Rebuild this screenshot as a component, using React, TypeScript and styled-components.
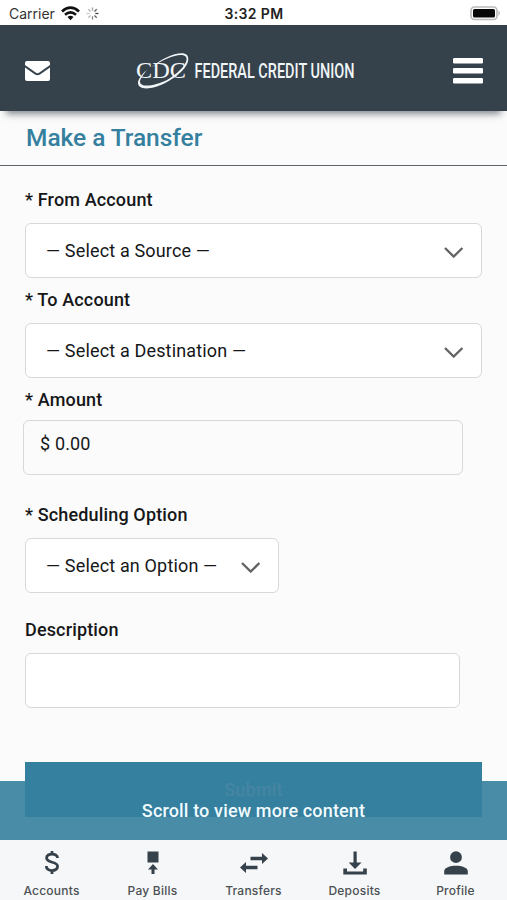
import React from "react";
import styled, { createGlobalStyle } from "styled-components";

const GlobalStyle = createGlobalStyle`
  * { box-sizing: border-box; }
  body { margin: 0; background: #fbfbfb; font-family: Roboto, "Liberation Sans", sans-serif; }
`;

const Screen = styled.div`
  position: relative;
  display: flex;
  flex-direction: column;
  width: 507px;
  height: 900px;
  overflow: hidden;
  background: #fbfbfb;
  color: #151719;
`;

const StatusBar = styled.div`
  display: grid;
  grid-template-columns: 1fr auto 1fr;
  align-items: center;
  height: 25px;
  padding: 2px 6px 0 9px;
  background: #fff;
  font-family: Inter, "Liberation Sans", sans-serif;
  font-size: 14px;
  line-height: 22px;
`;

const Carrier = styled.div`
  display: flex;
  align-items: center;
  gap: 6px;
  color: #333;
`;

const Clock = styled.div`
  margin-right: 2px;
  font-weight: 600;
  letter-spacing: 0.35px;
  color: #222;
`;

const Battery = styled.svg`
  justify-self: end;
`;

const Header = styled.header`
  display: flex;
  align-items: center;
  justify-content: space-between;
  height: 86px;
  flex: none;
  padding: 5px 24px 0 25px;
  background: #35414b;
  box-shadow: 0 9px 7px -6px rgba(50, 60, 70, 0.6);
  z-index: 1;
`;

const LogoLink = styled.a`
  display: flex;
  margin-right: 8px;
`;

const LogoSvg = styled.svg`
  overflow: visible;
`;

const IconButton = styled.button`
  display: flex;
  padding: 0;
  border: 0;
  background: none;
`;

const TitleBar = styled.div`
  flex: none;
  height: 55px;
  padding: 12px 25px 0 26px;
  border-bottom: 1px solid #5c6469;
`;

const Title = styled.h1`
  margin: 0;
  font-size: 24.5px;
  font-weight: 500;
  line-height: 30px;
  letter-spacing: -0.05px;
  color: #35809e;
`;

const Form = styled.form`
  display: flex;
  flex-direction: column;
  padding: 22px 25px 0;
`;

const Field = styled.div<{ $height: number }>`
  height: ${(p) => p.$height}px;
`;

const Label = styled.label<{ $gap?: number }>`
  display: block;
  margin-bottom: ${(p) => p.$gap ?? 11}px;
  font-size: 18px;
  font-weight: 500;
  line-height: 24px;
  letter-spacing: 0.15px;
`;

const Control = styled.div<{ $width: number }>`
  display: flex;
  align-items: center;
  justify-content: space-between;
  width: ${(p) => p.$width}px;
  height: 55px;
  padding: 0 18px 0 20px;
  border: 1px solid #d6d8d9;
  border-radius: 6px;
  background: #fff;
  font-size: 18px;
  line-height: 24px;
  letter-spacing: 0.16px;
`;

const AmountControl = styled(Control)`
  margin-left: -2px;
  padding: 0 16px 8px;
  background: #fbfbfb;
`;

const Submit = styled.button`
  height: 55px;
  padding: 0;
  border: 0;
  background: #35809e;
  color: #d0b4b4;
  font: 500 18px/24px Roboto, sans-serif;
  letter-spacing: 0.2px;
`;

const ScrollHint = styled.div`
  position: absolute;
  left: 0;
  right: 0;
  bottom: 60px;
  height: 59px;
  display: flex;
  align-items: center;
  justify-content: center;
  background: rgba(53, 128, 158, 0.9);
  color: #f1fafd;
  font-size: 18px;
  font-weight: 500;
  letter-spacing: 0.15px;
`;

const TabBar = styled.nav`
  position: absolute;
  left: 0;
  right: 0;
  bottom: 0;
  height: 60px;
  display: grid;
  grid-template-columns: repeat(5, 101px);
  padding: 9px 1px 0;
  background: #f6f7f8;
`;

const Tab = styled.a`
  display: flex;
  flex-direction: column;
  align-items: center;
  gap: 6px;
  color: #35414b;
`;

const TabLabel = styled.span`
  font: 500 12px/16px Inter, sans-serif;
  letter-spacing: 0.22px;
  color: #4b5054;
`;

const Chevron = () => (
  <svg width="20" height="14" viewBox="0 0 20 14" fill="none">
    <path d="M2 4L10.7 12.5L19.4 4" stroke="#626466" strokeWidth="2.4" />
  </svg>
);

const Wifi = () => (
  <svg width="19" height="15" viewBox="0 0 19 15" fill="none" stroke="#111">
    <path d="M1 5.4Q9.5 -2 18 5.4" strokeWidth="2.7" />
    <path d="M4 8.7Q9.5 4 15 8.7" strokeWidth="2.5" />
    <path d="M6.5 11.1Q9.5 8.5 12.5 11.1L9.5 14.2Z" fill="#111" stroke="none" />
  </svg>
);

const Spinner = () => (
  <svg width="13" height="13" viewBox="-6.5 -6.5 13 13" stroke="#333" strokeWidth="1.3">
    {[0.45, 0.8, 0.9, 0.75, 0.6, 0.35, 0.25, 0.35].map((opacity, i) => (
      <path key={i} d="M0 -2.8V-6" opacity={opacity} transform={`rotate(${i * 45})`} />
    ))}
  </svg>
);

const Logo = () => (
  <LogoSvg width="224" height="40" viewBox="0 0 224 40" fill="#f0f5f8">
    <text x="0" y="27" fontFamily="Liberation Serif, serif" fontSize="24" textLength="50" lengthAdjust="spacingAndGlyphs">CDC</text>
    <path
      fillRule="evenodd"
      d="M15 17C28 5 46 -1 51 4C56 11 46 23 31 31C17 39 1 40 2 31C3 27 7 22 11 19C7 24 4 28 4 31C5 37 19 35 31 29C44 21 53 11 50 6C46 1 30 6 15 17Z"
    />
    <text x="58.5" y="27" fontFamily="Roboto, sans-serif" fontSize="20" fontWeight="500" textLength="160" lengthAdjust="spacingAndGlyphs">FEDERAL CREDIT UNION</text>
  </LogoSvg>
);

const tabs = [
  {
    name: "Accounts",
    icon: <path d="M13 2V6M13 21V25M18.6 9C18.2 3.7 7.6 3.7 7.6 9C7.6 14.5 18.6 12 18.6 17.4C18.6 23 7.3 23 7.3 17" fill="none" stroke="currentColor" strokeWidth="2.8" />,
  },
  {
    name: "Pay Bills",
    icon: <path d="M7.5 2.5H18.5V13.5H7.5ZM13 15L18 20.5H14.5V25H11.5V20.5H8Z" fill="currentColor" />,
  },
  {
    name: "Transfers",
    icon: <path d="M9.5 7.8H21V4L27 9.5L21 15V11.2H9.5ZM16.5 16.8H5V13L-1 18.5L5 24V20.2H16.5Z" fill="currentColor" />,
  },
  {
    name: "Deposits",
    icon: <path d="M11.5 2.5H14.7V13.5H19.5L13 20L6.7 13.5H11.5ZM1.3 19.5H5V22.5H21.2V19.5H24.8V25.5H1.3Z" fill="currentColor" />,
  },
  {
    name: "Profile",
    icon: <path d="M13 2.3A5.9 5.9 0 1 1 13 14.1A5.9 5.9 0 1 1 13 2.3ZM1.2 25.5V22C1.2 18.7 7 16.7 13 16.7S24.8 18.7 24.8 22V25.5Z" fill="currentColor" />,
  },
];

const TabIcon = styled.svg`
  overflow: visible;
`;

export default function App() {
  return (
    <Screen>
      <GlobalStyle />
      <StatusBar>
        <Carrier>
          Carrier
          <Wifi />
          <Spinner />
        </Carrier>
        <Clock>3:32 PM</Clock>
        <Battery width="31" height="15" viewBox="0 0 31 15">
          <rect x="1" y="1" width="26" height="12.5" rx="3.5" fill="#fff" stroke="#bbb" strokeWidth="1.7" />
          <rect x="3" y="3" width="22" height="8.5" rx="1.5" fill="#080808" />
          <path d="M28.5 4.5Q31 7.2 28.5 10Z" fill="#aaa" />
        </Battery>
      </StatusBar>
      <Header>
        <IconButton aria-label="Messages">
          <svg width="25" height="20" viewBox="0 0 25 20" fill="#fff">
            <path d="M2 0H23Q25 0 25 2V4L14 11.8Q12.5 12.8 11 11.8L0 4V2Q0 0 2 0Z" />
            <path d="M0 6.4L10 13.4Q12.5 15 15 13.4L25 6.4V18Q25 20 23 20H2Q0 20 0 18Z" />
          </svg>
        </IconButton>
        <LogoLink aria-label="CDC Federal Credit Union">
          <Logo />
        </LogoLink>
        <IconButton aria-label="Menu">
          <svg width="30" height="26" viewBox="0 0 30 26" fill="#fff">
            <rect width="30" height="5.6" rx="1.3" />
            <rect y="10" width="30" height="5.6" rx="1.3" />
            <rect y="20" width="30" height="5.6" rx="1.3" />
          </svg>
        </IconButton>
      </Header>
      <TitleBar>
        <Title>Make a Transfer</Title>
      </TitleBar>
      <Form>
        <Field $height={100}>
          <Label>* From Account</Label>
          <Control $width={457}>— Select a Source —<Chevron /></Control>
        </Field>
        <Field $height={100}>
          <Label>* To Account</Label>
          <Control $width={457}>— Select a Destination —<Chevron /></Control>
        </Field>
        <Field $height={115}>
          <Label $gap={8}>* Amount</Label>
          <AmountControl $width={440}>$ 0.00</AmountControl>
        </Field>
        <Field $height={115}>
          <Label>* Scheduling Option</Label>
          <Control $width={254}>— Select an Option —<Chevron /></Control>
        </Field>
        <Field $height={144}>
          <Label>Description</Label>
          <Control $width={435} />
        </Field>
        <Submit type="button">Submit</Submit>
      </Form>
      <ScrollHint>Scroll to view more content</ScrollHint>
      <TabBar>
        {tabs.map((tab) => (
          <Tab key={tab.name}>
            <TabIcon width="26" height="28" viewBox="0 0 26 28">{tab.icon}</TabIcon>
            <TabLabel>{tab.name}</TabLabel>
          </Tab>
        ))}
      </TabBar>
    </Screen>
  );
}
